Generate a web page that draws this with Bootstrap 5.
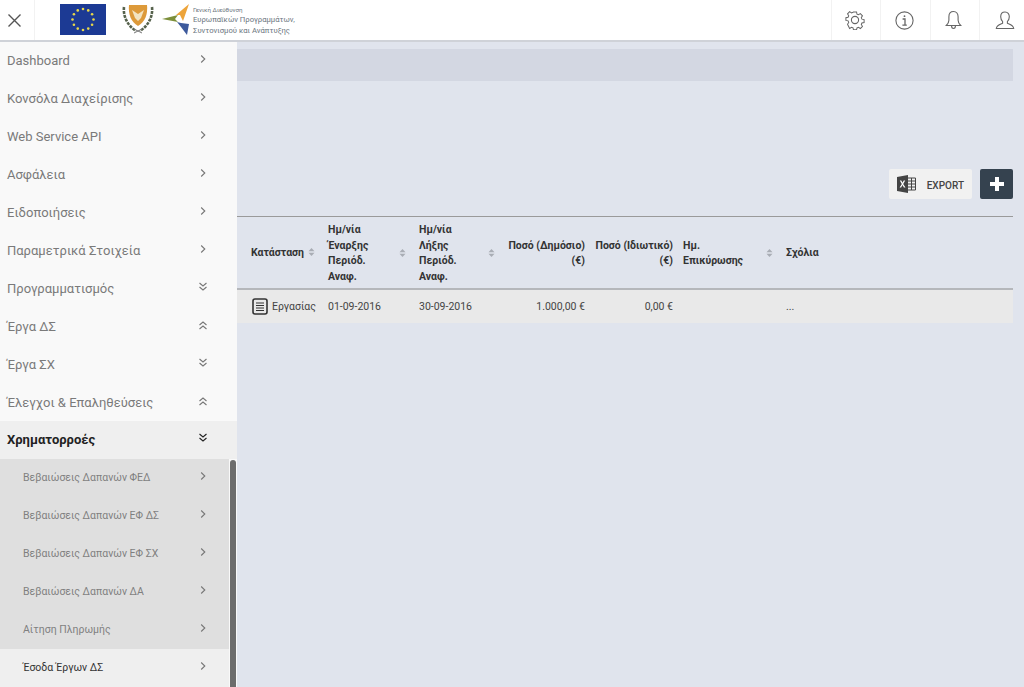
<!DOCTYPE html>
<html lang="el">
<head>
    <meta charset="UTF-8">
    <meta name="viewport" content="width=device-width, initial-scale=1.0">
    <title>Χρηματορροές</title>
    <link href="https://cdn.jsdelivr.net/npm/bootstrap@5.3.0/dist/css/bootstrap.min.css" rel="stylesheet">
    <style>
        html, body { height: 100%; overflow: hidden; }
        body { font-family: Roboto, "Liberation Sans", sans-serif; background: #e0e4ed; }
        .top-bar { background: #fff; border-bottom: 2px solid #cfd2d8; box-sizing: content-box; height: 40px; }
        .top-close { width: 35px; padding-left: 8px; border-right: 1px solid #f2f2f2; color: #555; }
        .top-logos { padding-left: 25px; padding-bottom: 2px; }
        .logo-text { color: #6c7680; font-size: 7.7px; line-height: 11px; margin-left: 2px; padding-top: 3px; white-space: nowrap; }
        .logo-text .logo-small { font-size: 6.2px; line-height: 8px; display: block; }
        .top-icon { width: 49.5px; padding-right: 2px; border-left: 1px solid #f2f2f2; color: #666; }
        .top-icon.icon-last { width: 45px; padding: 0 0 0 5px; }
        .page-body { height: 645px; }
        .side-menu { width: 237px; flex: none; background: #f9f9f9; overflow: hidden; }
        .side-item { height: 38px; padding: 0 29px 0 7px; color: #7a7a7a; font-size: 13px; text-decoration: none; }
        .side-item svg { color: #777; margin-top: -4px; }
        .side-item.item-open { margin-top: -1px; background: #efefef; color: #222; font-weight: 700; }
        .side-item.item-open svg { color: #222; }
        .side-sub { width: 229px; flex: none; background: #dfdfdf; }
        .side-sub .side-item { padding: 0 21px 0 23px; font-size: 10.5px; color: #7f7f7f; }
        .side-sub .side-item.sub-active { background: #efefef; color: #333; }
        .side-scroll { width: 6px; background: #6c6c6c; border-radius: 3px 3px 0 0; margin: 1px 1px 0 1px; }
        .main-area { min-width: 0; }
        .crumb-bar { height: 32px; margin: 7px 11px 0 0; background: #d3d7e2; }
        .tool-row { margin: 88px 11px 17px 0; height: 30px; }
        .btn-export { width: 83px; height: 30px; background: #f1f1f1; border: 0; border-radius: 2px; padding: 0 8px; color: #444; font-size: 10px; font-weight: 500; }
        .btn-export span { padding-top: 2px; }
        .btn-plus { width: 33px; height: 30px; background: #35424f; border: 0; border-radius: 2px; padding: 0; color: #fff; }
        .data-table { width: 776px; margin: 0; table-layout: fixed; --bs-table-bg: transparent; --bs-table-color: #333; border-top: 1px solid #9a9a9a; }
        .data-table th { font-size: 10.5px; line-height: 15.5px; font-weight: 700; color: #333; padding: 5px 5px 3px 8px; border-bottom: 2px solid #b5b7bb; vertical-align: middle; height: 72px; }
        .data-table td { font-size: 10.5px; color: #444; background: #e9e9e9; padding: 1px 8px 0; height: 34px; vertical-align: middle; border-bottom: 0; }
        .data-table th.col-first { padding-left: 14px; padding-top: 4px; padding-bottom: 4px; }
        .data-table th.col-notes { padding-top: 4px; padding-bottom: 4px; }
        .data-table .col-first-cell { padding-left: 15px; padding-right: 0; white-space: nowrap; }
        .data-table .col-money { text-align: right; padding-left: 0; padding-right: 8px; white-space: nowrap; }
        .data-table .col-tight { padding-left: 2px; }
        .sort-mark { color: #a9adb5; flex: none; }
        .th-sort { gap: 4px; }
        .note-dots { color: #888; }
    </style>
</head>
<body>
    <!-- Επάνω μπάρα -->
    <header class="top-bar d-flex align-items-stretch">
        <div class="top-close d-flex align-items-center">
            <svg width="13" height="13" viewBox="0 0 13 13" fill="none" stroke="currentColor" stroke-width="1.4"><path d="M.5.5l12 12M12.500.5l-12 12"/></svg>
        </div>
        <div class="top-logos d-flex align-items-center flex-grow-1">
            <svg width="46" height="31" viewBox="0 0 46 31" id="euFlag"><rect width="46" height="31" fill="#1c3a94"/></svg>
            <svg class="ms-3" width="32" height="30" viewBox="0 0 32 30" fill="none">
                <path d="M2 3c-1 9 3 18 12 24M30 3c1 9-3 18-12 24" stroke="#56624c" stroke-width="2.600" stroke-dasharray="3 1"/>
                <path d="M7 1h18c1 9-2 17-9 21C9 18 6 10 7 1z" fill="#dd9a3a"/>
                <path d="M10 6l6 4 6-4-3 8-3 3-3-3z" fill="#f3e4c0"/>
                <path d="M12 25l8 4M20 25l-8 4" stroke="#777" stroke-width="1"/>
            </svg>
            <svg class="ms-2" width="29" height="31" viewBox="0 0 29 31">
                <path d="M0 15l16-4-3 4 3 3z" fill="#7c8f3a"/>
                <path d="M14 11L27 0l-6 17-3-6z" fill="#eda43a"/>
                <path d="M15 18l4 1 8 1-2 11-6-8z" fill="#3d5a9c"/>
            </svg>
            <div class="logo-text">
                <span class="logo-small">Γενική Διεύθυνση</span>
                Ευρωπαϊκών Προγραμμάτων,<br>Συντονισμού και Ανάπτυξης
            </div>
        </div>
        <div class="top-icon d-flex align-items-center justify-content-center">
            <svg width="20" height="20" viewBox="0 0 20 20" fill="none" stroke="currentColor" stroke-width="1.1"><path d="M8.3 1.5h3.4l.5 2.4 1.6.7 2.1-1.3 2.3 2.4-1.3 2 .7 1.7 2.4.5v3.2l-2.4.5-.7 1.7 1.3 2-2.3 2.4-2.1-1.3-1.6.7-.5 1.9H8.3l-.5-2-1.6-.7-2.1 1.3L1.8 15l1.3-2-.7-1.7-2.4-.5V7.8l2.4-.5.7-1.7-1.3-2 2.3-2.4 2.1 1.3 1.6-.7z" transform="translate(.9 .6) scale(.91)"/><circle cx="10" cy="10" r="3.6"/></svg>
        </div>
        <div class="top-icon d-flex align-items-center justify-content-center">
            <svg width="19" height="19" viewBox="0 0 19 19" fill="none" stroke="currentColor" stroke-width="1.1"><circle cx="9.5" cy="9.5" r="8.6"/><circle cx="9.5" cy="5.2" r=".9" fill="currentColor" stroke="none"/><path d="M7.6 8h2.4v6M7.4 14.2h4.4" stroke-width="1.3"/></svg>
        </div>
        <div class="top-icon d-flex align-items-center justify-content-center">
            <svg width="17" height="20" viewBox="0 0 17 20" fill="none" stroke="currentColor" stroke-width="1.1"><path d="M8.5 1.5c-3 0-4.6 2.3-4.6 5.2v3.6c0 2.2-1 3.5-2.6 5.2h14.4c-1.6-1.7-2.6-3-2.6-5.2V6.700c0-2.900-1.600-5.200-4.600-5.200zM6.500 15.500c0 2 .9 3 2 3s2-1 2-3"/></svg>
        </div>
        <div class="top-icon icon-last d-flex align-items-center justify-content-center">
            <svg width="20" height="19" viewBox="0 0 20 19" fill="none" stroke="currentColor" stroke-width="1.1"><path d="M10 1c-2.800 0-4.300 2-4.300 4.700 0 2 .8 3.600 1.900 4.800v1.700c-2.300 1-6 1.800-6.300 5.300h17.400c-.3-3.500-4-4.300-6.300-5.300v-1.700c1.100-1.200 1.900-2.800 1.900-4.800C14.300 3 12.800 1 10 1z"/></svg>
        </div>
    </header>

    <div class="page-body d-flex">
        <!-- Πλαϊνό μενού -->
        <nav class="side-menu" id="sideMenu"></nav>

        <!-- Κύριο περιεχόμενο -->
        <main class="main-area flex-grow-1">
            <div class="crumb-bar"></div>
            <div class="tool-row d-flex justify-content-end gap-2">
                <button class="btn-export d-flex align-items-center justify-content-between">
                    <svg width="19" height="18" viewBox="0 0 19 18"><path d="M0 2l11-2v18L0 16z" fill="#444"/><path d="M2.800 5.500l2 3.400-2.200 3.600h1.500l1.400-2.500 1.400 2.500h1.600L6.200 8.900l2-3.400H6.700L5.500 7.700 4.300 5.500z" fill="#fff"/><path d="M11 3h7.500v12H11" fill="none" stroke="#444" stroke-width="1"/><path d="M11 6h7.500M11 9h7.500M11 12h7.500M14.500 3v12" stroke="#444" stroke-width="1"/></svg>
                    <span>EXPORT</span>
                </button>
                <button class="btn-plus d-flex align-items-center justify-content-center">
                    <svg width="14" height="14" viewBox="0 0 14 14"><path d="M5 0h4v5h5v4H9v5H5V9H0V5h5z" fill="#fff"/></svg>
                </button>
            </div>
            <table class="table data-table">
                <colgroup>
                    <col style="width:83px"><col style="width:91px"><col style="width:89px"><col style="width:93px"><col style="width:88px"><col style="width:97px"><col>
                </colgroup>
                <thead>
                    <tr>
                        <th class="col-first"><div class="d-flex align-items-center th-sort"><span>Κατάσταση</span><svg class="sort-mark" width="7" height="10" viewBox="0 0 7 10" fill="currentColor"><path d="M3.500 1l3 3.200H.5zM3.500 9l3-3.200H.5z"/></svg></div></th>
                        <th><div class="d-flex align-items-center justify-content-between"><span>Ημ/νία<br>Έναρξης<br>Περιόδ.<br>Αναφ.</span><svg class="sort-mark" width="7" height="10" viewBox="0 0 7 10" fill="currentColor"><path d="M3.500 1l3 3.200H.5zM3.500 9l3-3.200H.5z"/></svg></div></th>
                        <th><div class="d-flex align-items-center justify-content-between"><span>Ημ/νία<br>Λήξης<br>Περιόδ.<br>Αναφ.</span><svg class="sort-mark" width="7" height="10" viewBox="0 0 7 10" fill="currentColor"><path d="M3.500 1l3 3.200H.5zM3.500 9l3-3.200H.5z"/></svg></div></th>
                        <th class="col-money">Ποσό (Δημόσιο)<br>(€)</th>
                        <th class="col-money">Ποσό (Ιδιωτικό)<br>(€)</th>
                        <th class="col-tight"><div class="d-flex align-items-center justify-content-between"><span>Ημ.<br>Επικύρωσης</span><svg class="sort-mark" width="7" height="10" viewBox="0 0 7 10" fill="currentColor"><path d="M3.500 1l3 3.200H.5zM3.500 9l3-3.200H.5z"/></svg></div></th>
                        <th class="col-notes">Σχόλια</th>
                    </tr>
                </thead>
                <tbody>
                    <tr>
                        <td class="col-first-cell"><div class="d-flex align-items-center gap-1"><svg width="16" height="17" viewBox="0 0 16 17" fill="none" stroke="#333"><rect x="1" y="1" width="14" height="15" rx="2" stroke-width="1.600"/><path d="M4 5h8M4 7.500h8M4 10h8M4 12.500h8" stroke-width="1.200"/></svg><span>Εργασίας</span></div></td>
                        <td>01-09-2016</td>
                        <td>30-09-2016</td>
                        <td class="col-money">1.000,00 €</td>
                        <td class="col-money">0,00 €</td>
                        <td></td>
                        <td class="note-dots">...</td>
                    </tr>
                </tbody>
            </table>
        </main>
    </div>

    <script>
        // Αστέρια της σημαίας
        const flag = document.getElementById('euFlag');
        let stars = '';
        for (let i = 0; i < 12; i++) {
            const a = i * Math.PI / 6;
            stars += `<circle cx="${23 + 10.5 * Math.cos(a)}" cy="${15.5 + 10.5 * Math.sin(a)}" r="1.300" fill="#e8d84a"/>`;
        }
        flag.innerHTML += stars;

        const arrows = {
            right: '<path d="M3.200 1.500L6.800 5 3.200 8.500"/>',
            down: '<path d="M1.500 1l3.500 3 3.500-3M1.500 5l3.500 3 3.500-3"/>',
            up: '<path d="M1.500 5l3.500-3 3.500 3M1.500 9l3.500-3 3.500 3"/>'
        };
        const arrowSvg = k => `<svg width="10" height="10" viewBox="0 0 10 10" fill="none" stroke="currentColor" stroke-width="1.100">${arrows[k]}</svg>`;

        const main = [
            ['Dashboard', 'right'], ['Κονσόλα Διαχείρισης', 'right'], ['Web Service API', 'right'],
            ['Ασφάλεια', 'right'], ['Ειδοποιήσεις', 'right'], ['Παραμετρικά Στοιχεία', 'right'],
            ['Προγραμματισμός', 'down'], ['Έργα ΔΣ', 'up'], ['Έργα ΣΧ', 'down'], ['Έλεγχοι & Επαληθεύσεις', 'up']
        ];
        const subs = ['Βεβαιώσεις Δαπανών ΦΕΔ', 'Βεβαιώσεις Δαπανών ΕΦ ΔΣ', 'Βεβαιώσεις Δαπανών ΕΦ ΣΧ', 'Βεβαιώσεις Δαπανών ΔΑ', 'Αίτηση Πληρωμής', 'Έσοδα Έργων ΔΣ'];

        const row = (text, kind, cls) => `<a href="#" class="side-item d-flex align-items-center justify-content-between ${cls}"><span>${text}</span>${arrowSvg(kind)}</a>`;
        let html = main.map(m => row(m[0], m[1], '')).join('');
        html += row('Χρηματορροές', 'down', 'item-open');
        html += '<div class="d-flex"><div class="side-sub">';
        html += subs.map((s, i) => row(s, 'right', i === 5 ? 'sub-active' : '')).join('');
        html += '</div><div class="side-scroll"></div></div>';
        document.getElementById('sideMenu').innerHTML = html;
    </script>
    <script src="https://cdn.jsdelivr.net/npm/bootstrap@5.3.0/dist/js/bootstrap.bundle.min.js"></script>
</body>
</html>
